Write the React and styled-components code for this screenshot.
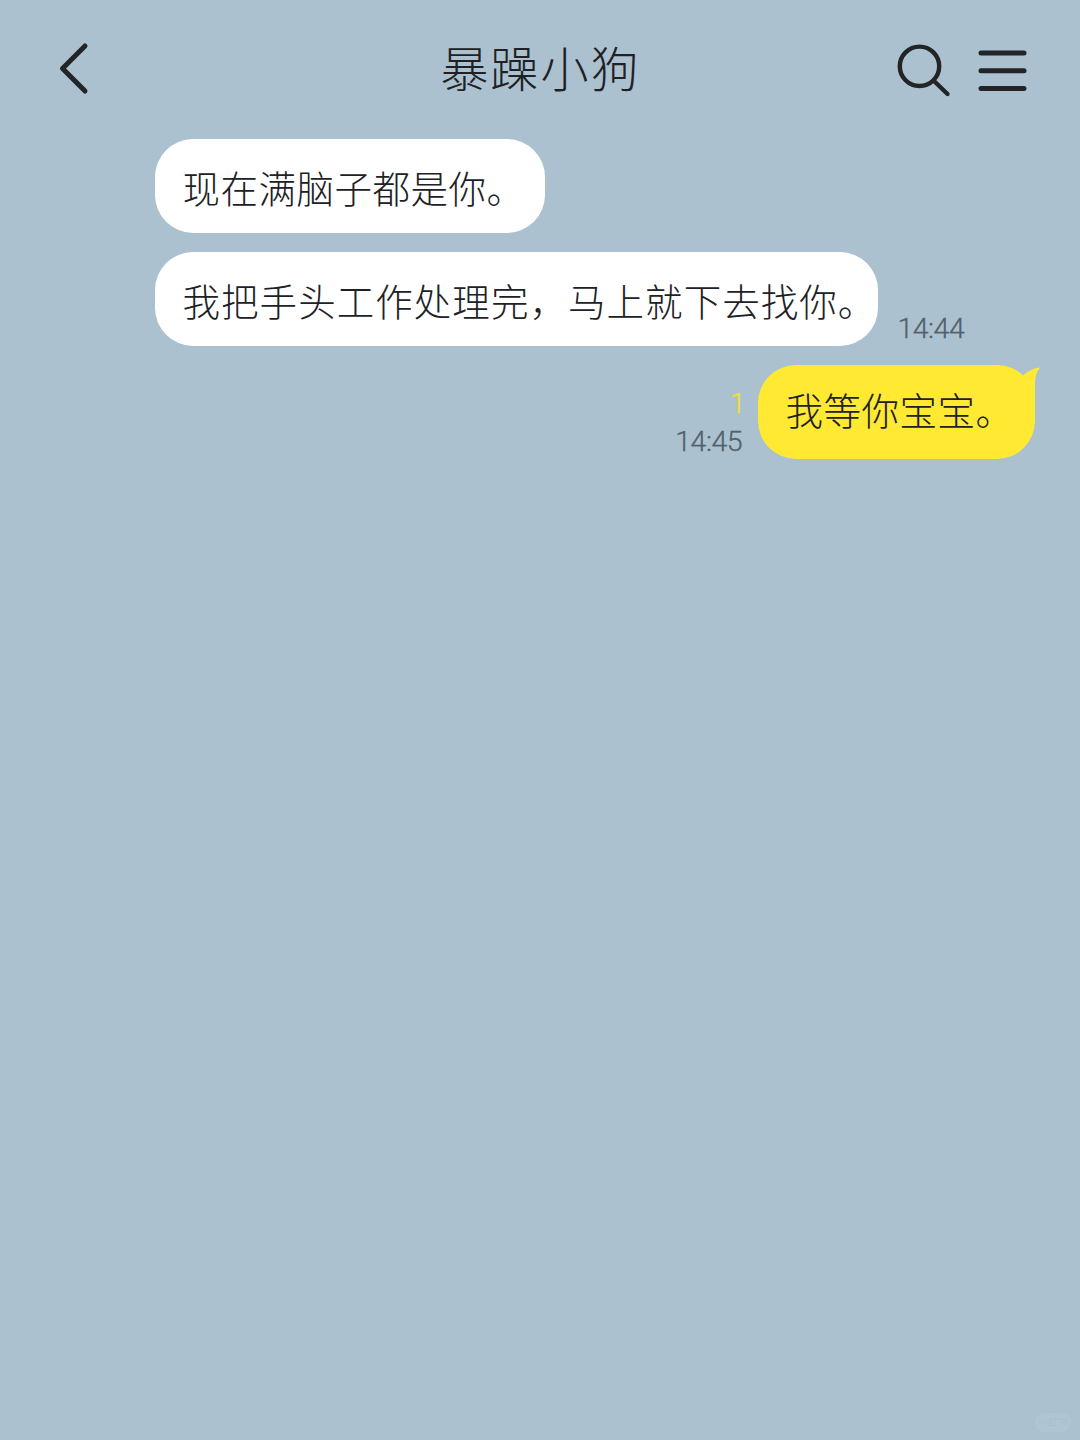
import React from "react";
import styled, { createGlobalStyle } from "styled-components";

const GlobalStyle = createGlobalStyle`
  * { box-sizing: border-box; }
  body { margin: 0; background: #abc1d0; }
`;

const Screen = styled.main`
  width: 1080px;
  height: 1440px;
  display: flex;
  flex-direction: column;
  background: #abc1d0;
  color: #202124;
  font-family: "Noto Sans CJK SC", sans-serif;
  font-weight: 300;
  overflow: hidden;
`;

const Header = styled.header`
  height: 139px;
  display: grid;
  grid-template-columns: 200px 1fr 200px;
  padding: 0 40px;
`;

const Title = styled.h1`
  margin: 0;
  padding-top: 31px;
  text-align: center;
  font-size: 48px;
  line-height: 70px;
  font-weight: 300;
  letter-spacing: 2px;
  text-indent: 1px;
`;

const IconButton = styled.button`
  border: 0;
  padding: 0;
  background: none;
  color: #222426;
  height: 60px;
  width: ${(p) => p.$width}px;
  svg { display: block; }
`;

const Left = styled.div`
  padding: 39px 0 0 12px;
`;

const Actions = styled.div`
  padding: 39px 7px 0 0;
  display: flex;
  justify-content: flex-end;
  gap: 20px;
`;

const Thread = styled.section`
  flex: 1;
  display: flex;
  flex-direction: column;
  gap: 19px;
  padding: 0 45px 0 155px;
`;

const Row = styled.div`
  display: flex;
  align-items: flex-end;
  justify-content: ${(p) => (p.$own ? "flex-end" : "flex-start")};
  gap: ${(p) => (p.$own ? 16 : 20)}px;
`;

const Bubble = styled.div`
  position: relative;
  width: ${(p) => p.$width}px;
  height: 94px;
  padding: ${(p) => (p.$own ? 17 : 21)}px 0 0 27.5px;
  border-radius: 38px;
  background: ${(p) => (p.$own ? "#ffe933" : "#ffffff")};
  font-size: 37.5px;
  line-height: 54px;
  letter-spacing: ${(p) => p.$tracking}px;
  white-space: nowrap;
`;

const Tail = styled.svg`
  position: absolute;
  right: -6px;
  top: 0;
  color: #ffe933;
`;

const Meta = styled.div`
  height: 78px;
  display: flex;
  flex-direction: column;
  align-items: flex-end;
  justify-content: flex-end;
  margin-bottom: -2px;
  font-family: Roboto, "Noto Sans CJK SC", sans-serif;
  font-size: 28.5px;
  line-height: 38px;
  font-weight: 300;
  letter-spacing: -0.5px;
  color: #52616c;
  -webkit-text-stroke: 0.3px currentColor;
`;

const Unread = styled.span`
  color: #f4df2e;
  margin-right: -3px;
`;

const Footer = styled.footer`
  display: flex;
  justify-content: flex-end;
  padding: 0 9px 8px;
`;

const Mark = styled.span`
  width: 36px;
  height: 19px;
  border-radius: 9px;
  background: #b0c5d3;
  color: #a8bccb;
  font-size: 10px;
  line-height: 18px;
  text-align: center;
`;

const messages = [
  { text: "现在满脑子都是你。", width: 390, tracking: 0.5 },
  { text: "我把手头工作处理完，马上就下去找你。", width: 722.5, tracking: 1.05, time: "14:44" },
  { text: "我等你宝宝。", width: 277, tracking: 0.5, time: "14:45", own: true, unread: 1 },
];

function Message({ text, width, tracking, time, own, unread }) {
  const meta = time && (
    <Meta>
      {unread && <Unread>{unread}</Unread>}
      <span>{time}</span>
    </Meta>
  );
  return (
    <Row $own={own}>
      {own && meta}
      <Bubble $own={own} $width={width} $tracking={tracking}>
        {text}
        {own && (
          <Tail width="24" height="38" viewBox="0 0 24 38" fill="currentColor">
            <path d="M0 15 L6.5 10 Q13.500 3.500 23 2.500 Q18 9 18 17 V38 L0 25Z" />
          </Tail>
        )}
      </Bubble>
      {!own && meta}
    </Row>
  );
}

export default function App() {
  return (
    <Screen>
      <GlobalStyle />
      <Header>
        <Left>
          <IconButton $width={44} aria-label="返回">
            <svg width="44" height="60" viewBox="0 0 44 60" fill="none" stroke="currentColor" strokeWidth="5" strokeLinecap="round" strokeLinejoin="round">
              <path d="M33 7 L10.500 29.500 L33 52" />
            </svg>
          </IconButton>
        </Left>
        <Title>暴躁小狗</Title>
        <Actions>
          <IconButton $width={60} aria-label="搜索">
            <svg width="60" height="60" viewBox="0 0 60 60" fill="none" stroke="currentColor" strokeWidth="4.4" strokeLinecap="round">
              <circle cx="26.500" cy="27.300" r="19.700" />
              <path d="M41 42 L54.500 55" />
            </svg>
          </IconButton>
          <IconButton $width={60} aria-label="菜单">
            <svg width="60" height="60" viewBox="0 0 60 60" fill="none" stroke="currentColor" strokeWidth="5" strokeLinecap="round">
              <path d="M8 13.900 H51 M8 31.700 H51 M8 49.600 H51" />
            </svg>
          </IconButton>
        </Actions>
      </Header>
      <Thread>
        {messages.map((m) => (
          <Message key={m.text} {...m} />
        ))}
      </Thread>
      <Footer>
        <Mark>小红书</Mark>
      </Footer>
    </Screen>
  );
}
